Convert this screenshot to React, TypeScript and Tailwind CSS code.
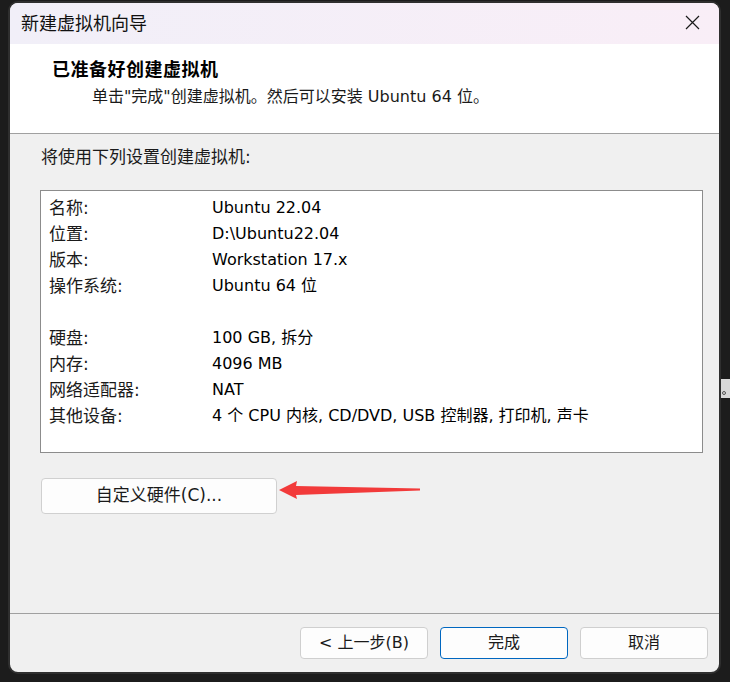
import React from 'react';

const rows: { label: string; value: string }[] = [
  { label: '名称:', value: 'Ubuntu 22.04' },
  { label: '位置:', value: 'D:\\Ubuntu22.04' },
  { label: '版本:', value: 'Workstation 17.x' },
  { label: '操作系统:', value: 'Ubuntu 64 位' },
  { label: '', value: '' },
  { label: '硬盘:', value: '100 GB, 拆分' },
  { label: '内存:', value: '4096 MB' },
  { label: '网络适配器:', value: 'NAT' },
  { label: '其他设备:', value: '4 个 CPU 内核, CD/DVD, USB 控制器, 打印机, 声卡' },
];

const WizardButton: React.FC<{ label: string; primary?: boolean }> = ({ label, primary }) => (
  <button
    type="button"
    className={
      primary
        ? 'w-[128px] h-[32px] rounded-[4px] border border-[#0067c0] bg-[#fdfdfd] text-[16px] text-[#1a1a1a] flex items-center justify-center'
        : 'w-[128px] h-[32px] rounded-[4px] border border-[#cfcfcf] bg-[#fdfdfd] text-[16px] text-[#1a1a1a] flex items-center justify-center'
    }
  >
    {label}
  </button>
);

export default function App() {
  return (
    <div className="w-[730px] h-[682px] bg-[#1c1c1c] flex items-start font-['DejaVu_Sans','Noto_Sans_CJK_SC',sans-serif] text-black">
      {/* wizard window */}
      <div className="ml-[8px] mt-[1px] w-[713px] h-[673px] border-2 border-[#2f2f2f] rounded-[10px] overflow-hidden flex flex-col bg-[#f0f0f0]">
        {/* title bar */}
        <div className="h-[41px] shrink-0 flex items-center justify-between bg-linear-to-r from-[#f1eff8] to-[#f9eef7] pl-[11px] pr-[19px]">
          <span className="text-[18px] leading-[24px] mt-[-3px] font-['Noto_Sans_CJK_SC',sans-serif] text-[#111]">新建虚拟机向导</span>
          <svg width="15" height="15" viewBox="0 0 15 15" className="mt-[-2px]">
            <path d="M1 1 L14 14 M14 1 L1 14" stroke="#1a1a1a" strokeWidth="1.2" fill="none" />
          </svg>
        </div>

        {/* header */}
        <div className="h-[90px] shrink-0 bg-white flex flex-col border-b border-[#a0a0a0]">
          <div className="pl-[42px] mt-[11px] h-[26px] leading-[26px] text-[18px] font-bold tracking-[0.5px] font-['Noto_Sans_CJK_SC',sans-serif]">
            已准备好创建虚拟机
          </div>
          <div className="pl-[82px] mt-[3px] h-[26px] leading-[26px] text-[16px] text-[#1a1a1a]">
            单击"完成"创建虚拟机。然后可以安装 Ubuntu 64 位。
          </div>
        </div>

        {/* body */}
        <div className="relative flex-1 flex flex-col">
          <div className="pl-[31px] mt-[11px] h-[24px] leading-[24px] text-[17px] text-[#1a1a1a]">
            将使用下列设置创建虚拟机:
          </div>
          <div className="ml-[30px] mt-[21px] w-[663px] h-[263px] border border-[#8c8c8c] bg-white pt-[4px] pl-[8px]">
            {rows.map((r, i) => (
              <div key={i} className="flex h-[26px] leading-[26px]">
                <div className="w-[163px] shrink-0 text-[17px] text-[#1a1a1a]">{r.label}</div>
                <div className="text-[16px] text-black whitespace-nowrap">{r.value}</div>
              </div>
            ))}
          </div>
          <div className="ml-[31px] mt-[25px]">
            <button
              type="button"
              className="w-[236px] h-[36px] rounded-[4px] border border-[#d0d0d0] bg-[#fdfdfd] text-[17px] text-[#1a1a1a] flex items-center justify-center"
            >
              自定义硬件(C)...
            </button>
          </div>

          {/* red annotation arrow */}
          <svg
            width="150"
            height="30"
            viewBox="0 0 150 30"
            className="absolute left-[265px] top-[341px]"
          >
            <polygon
              points="4,15 22,6 21,11 145,13.5 145,15.5 21,20 22,24"
              fill="#f23a3a"
            />
          </svg>
        </div>

        {/* footer */}
        <div className="h-[59px] shrink-0 border-t border-[#a0a0a0] flex items-start justify-end gap-[12px] pt-[13px] pr-[11px]">
          <WizardButton label="< 上一步(B)" />
          <WizardButton label="完成" primary />
          <WizardButton label="取消" />
        </div>
      </div>

      {/* edge of another window behind */}
      <div className="mt-[379px] w-[9px] h-[19px] bg-[#d8d8d8] flex items-end pb-[3px] pl-[1px]">
        <div className="w-[4px] h-[4px] rounded-full border border-[#555]" />
      </div>
    </div>
  );
}
